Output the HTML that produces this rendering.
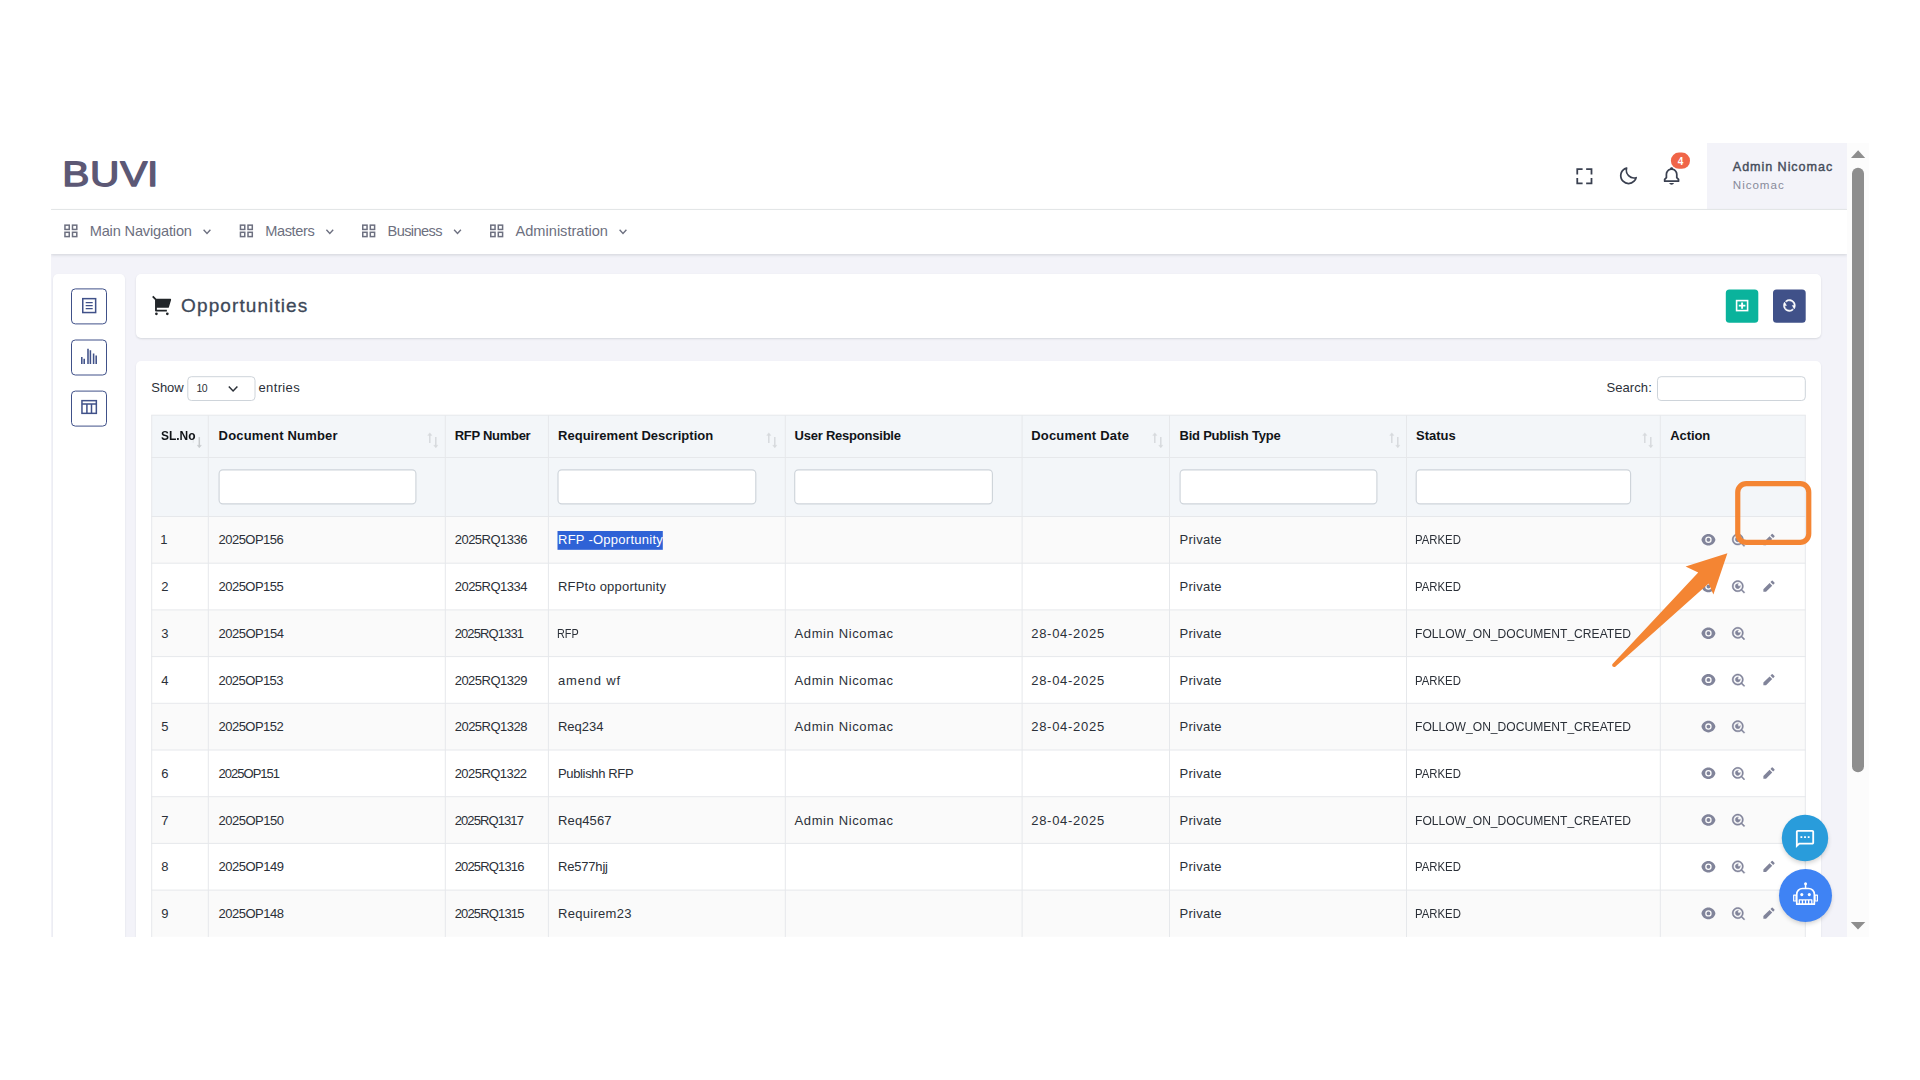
<!DOCTYPE html>
<html lang="en">
<head>
<meta charset="utf-8">
<title>Opportunities</title>
<style>
html,body{margin:0;padding:0;background:#fff}
body{width:1920px;height:1080px;overflow:hidden;position:relative;font-family:'Liberation Sans',sans-serif}
.frame{position:absolute;left:51px;top:143px;width:1818px;height:794px;overflow:hidden}
.inner{position:absolute;left:-51px;top:-143px;width:1920px;height:1080px}
.b{position:absolute}
.t{position:absolute;white-space:pre;line-height:1;font-weight:400;font-style:normal;text-align:left}
header,nav,main,h4,label,table,thead,tbody,tr,th,td{display:contents}
.i{position:absolute;overflow:visible}
</style>
</head>
<body>
<div class="frame"><div class="inner">
<div class="b" style="left:51px;top:143px;width:1796px;height:794px;background:#f3f3f9"></div>
<div class="b" style="left:51px;top:143px;width:1796px;height:66px;background:#fff"></div>
<div class="b" style="left:1707px;top:143px;width:140px;height:66px;background:#f3f3f9"></div>
<div class="b" style="left:51px;top:209px;width:1796px;height:1px;background:#e9ebec"></div>
<div class="b" style="left:51px;top:210px;width:1796px;height:44px;background:#fff;box-shadow:0 1px 3px rgba(56,65,74,.18)"></div>
<div class="b" style="left:53px;top:274px;width:72px;height:700px;background:#fff;border-radius:5px;box-shadow:0 1px 2px rgba(56,65,74,.12)"></div>
<div class="b" style="left:136px;top:274px;width:1685px;height:64px;background:#fff;border-radius:5px;box-shadow:0 1px 2px rgba(56,65,74,.15)"></div>
<div class="b" style="left:136px;top:360.5px;width:1685px;height:700px;background:#fff;border-radius:5px;box-shadow:0 1px 2px rgba(56,65,74,.12)"></div>
<div class="b" style="left:1847px;top:143px;width:22px;height:794px;background:#fcfcfc"></div>
<svg class="i" style="left:0;top:0" width="1920" height="1080" viewBox="0 0 1920 1080"><rect x="71.50" y="288.90" width="35.00" height="35.00" rx="3.8" fill="#fff" stroke="#405189" stroke-width="1"/>
<rect x="71.50" y="340.00" width="35.00" height="35.00" rx="3.8" fill="#fff" stroke="#405189" stroke-width="1"/>
<rect x="71.50" y="391.10" width="35.00" height="35.00" rx="3.8" fill="#fff" stroke="#405189" stroke-width="1"/>
<rect x="1725.80" y="289.40" width="32.50" height="33.40" rx="3.6" fill="#0ab39c"/>
<rect x="1773.00" y="289.40" width="32.70" height="33.40" rx="3.6" fill="#405189"/>
<rect x="187.80" y="376.70" width="67.20" height="23.80" rx="3.6" fill="#fff" stroke="#ced4da" stroke-width="1"/>
<rect x="1657.50" y="376.70" width="147.80" height="23.80" rx="3.6" fill="#fff" stroke="#ced4da" stroke-width="1"/>
<rect x="151.70" y="415.20" width="1653.60" height="101.30" fill="#f3f6f9"/>
<rect x="151.70" y="516.50" width="1653.60" height="46.70" fill="#fafafa"/>
<rect x="151.70" y="609.90" width="1653.60" height="46.70" fill="#fafafa"/>
<rect x="151.70" y="703.30" width="1653.60" height="46.70" fill="#fafafa"/>
<rect x="151.70" y="796.70" width="1653.60" height="46.70" fill="#fafafa"/>
<rect x="151.70" y="890.10" width="1653.60" height="46.70" fill="#fafafa"/>
<rect x="151.20" y="414.70" width="1654.60" height="1.00" fill="#e6e8eb"/>
<rect x="151.20" y="457.00" width="1654.60" height="1.00" fill="#e6e8eb"/>
<rect x="151.20" y="516.00" width="1654.60" height="1.00" fill="#e6e8eb"/>
<rect x="151.20" y="562.70" width="1654.60" height="1.00" fill="#e6e8eb"/>
<rect x="151.20" y="609.40" width="1654.60" height="1.00" fill="#e6e8eb"/>
<rect x="151.20" y="656.10" width="1654.60" height="1.00" fill="#e6e8eb"/>
<rect x="151.20" y="702.80" width="1654.60" height="1.00" fill="#e6e8eb"/>
<rect x="151.20" y="749.50" width="1654.60" height="1.00" fill="#e6e8eb"/>
<rect x="151.20" y="796.20" width="1654.60" height="1.00" fill="#e6e8eb"/>
<rect x="151.20" y="842.90" width="1654.60" height="1.00" fill="#e6e8eb"/>
<rect x="151.20" y="889.60" width="1654.60" height="1.00" fill="#e6e8eb"/>
<rect x="151.20" y="415.20" width="1.00" height="560.00" fill="#e6e8eb"/>
<rect x="207.80" y="415.20" width="1.00" height="560.00" fill="#e6e8eb"/>
<rect x="444.80" y="415.20" width="1.00" height="560.00" fill="#e6e8eb"/>
<rect x="547.90" y="415.20" width="1.00" height="560.00" fill="#e6e8eb"/>
<rect x="784.80" y="415.20" width="1.00" height="560.00" fill="#e6e8eb"/>
<rect x="1021.60" y="415.20" width="1.00" height="560.00" fill="#e6e8eb"/>
<rect x="1169.00" y="415.20" width="1.00" height="560.00" fill="#e6e8eb"/>
<rect x="1406.00" y="415.20" width="1.00" height="560.00" fill="#e6e8eb"/>
<rect x="1659.80" y="415.20" width="1.00" height="560.00" fill="#e6e8eb"/>
<rect x="1804.80" y="415.20" width="1.00" height="560.00" fill="#e6e8eb"/>
<rect x="219.10" y="469.90" width="196.80" height="34.00" rx="3.8" fill="#fff" stroke="#ced4da" stroke-width="1.15"/>
<rect x="558.00" y="469.90" width="197.80" height="34.00" rx="3.8" fill="#fff" stroke="#ced4da" stroke-width="1.15"/>
<rect x="794.70" y="469.90" width="197.70" height="34.00" rx="3.8" fill="#fff" stroke="#ced4da" stroke-width="1.15"/>
<rect x="1180.10" y="469.90" width="196.80" height="34.00" rx="3.8" fill="#fff" stroke="#ced4da" stroke-width="1.15"/>
<rect x="1416.20" y="469.90" width="214.40" height="34.00" rx="3.8" fill="#fff" stroke="#ced4da" stroke-width="1.15"/>
<rect x="557.50" y="531.00" width="105.30" height="18.80" fill="#2f62d6"/>
<rect x="1852.00" y="167.80" width="12.00" height="604.50" rx="6" fill="#8e8e8e"/>
<path d="M1851 158L1858.1 150.3L1865.2 158Z" fill="#8e8e8e"/>
<path d="M1850.8 922L1858 929.6L1865.3 922Z" fill="#8e8e8e"/>
<rect x="1670.90" y="152.60" width="19.10" height="16.20" rx="8.1" fill="#f06548"/></svg>
<svg class="i" style="left:0;top:0" width="1920" height="1080" viewBox="0 0 1920 1080"><text text-rendering="geometricPrecision" transform="scale(1.15,1)" x="54.11 78.18 104.5 127.82" y="186.1" font-family="'Liberation Sans',sans-serif" font-size="35.4" fill="#5c5875" stroke="#5c5875" stroke-width="1.3" stroke-linejoin="round">BUVI</text>
<g transform="translate(64.20 224.40)"><g fill="none" stroke="#6d7080" stroke-width="1.5"><rect x=".75" y=".75" width="4.3" height="4.3"/><rect x="8.3" y=".75" width="4.3" height="4.3"/><rect x=".75" y="7.9" width="4.3" height="4.3"/><rect x="8.3" y="7.9" width="4.3" height="4.3"/></g></g>
<g transform="translate(203.00 229.00)"><path d="M.6 .8L4 4.4L7.4 .8" fill="none" stroke="#6d7080" stroke-width="1.4"/></g>
<g transform="translate(239.70 224.40)"><g fill="none" stroke="#6d7080" stroke-width="1.5"><rect x=".75" y=".75" width="4.3" height="4.3"/><rect x="8.3" y=".75" width="4.3" height="4.3"/><rect x=".75" y="7.9" width="4.3" height="4.3"/><rect x="8.3" y="7.9" width="4.3" height="4.3"/></g></g>
<g transform="translate(325.80 229.00)"><path d="M.6 .8L4 4.4L7.4 .8" fill="none" stroke="#6d7080" stroke-width="1.4"/></g>
<g transform="translate(362.00 224.40)"><g fill="none" stroke="#6d7080" stroke-width="1.5"><rect x=".75" y=".75" width="4.3" height="4.3"/><rect x="8.3" y=".75" width="4.3" height="4.3"/><rect x=".75" y="7.9" width="4.3" height="4.3"/><rect x="8.3" y="7.9" width="4.3" height="4.3"/></g></g>
<g transform="translate(453.50 229.00)"><path d="M.6 .8L4 4.4L7.4 .8" fill="none" stroke="#6d7080" stroke-width="1.4"/></g>
<g transform="translate(490.00 224.40)"><g fill="none" stroke="#6d7080" stroke-width="1.5"><rect x=".75" y=".75" width="4.3" height="4.3"/><rect x="8.3" y=".75" width="4.3" height="4.3"/><rect x=".75" y="7.9" width="4.3" height="4.3"/><rect x="8.3" y="7.9" width="4.3" height="4.3"/></g></g>
<g transform="translate(619.00 229.00)"><path d="M.6 .8L4 4.4L7.4 .8" fill="none" stroke="#6d7080" stroke-width="1.4"/></g>
<g transform="translate(1573.70 165.50) scale(0.8900)"><path fill="#3a4050" d="M5 5h5V3H3v7h2zm5 14H5v-5H3v7h7zm11-5h-2v5h-5v2h7zm-2-4h2V3h-7v2h5z"/></g>
<g transform="translate(1617.90 165.60) scale(0.8660)"><path fill="#3a4050" d="M20.742 13.045a8.088 8.088 0 0 1-2.077.271c-2.135 0-4.140-.83-5.646-2.336a8.025 8.025 0 0 1-2.064-7.723A1 1 0 0 0 9.730 2.034a10.014 10.014 0 0 0-4.489 2.582c-3.898 3.898-3.898 10.243 0 14.143a9.937 9.937 0 0 0 7.072 2.930 9.930 9.930 0 0 0 7.070-2.929 10.007 10.007 0 0 0 2.583-4.491 1.001 1.001 0 0 0-1.224-1.224zm-2.772 4.301a7.947 7.947 0 0 1-5.656 2.343 7.953 7.953 0 0 1-5.658-2.344c-3.118-3.119-3.118-8.195 0-11.314a7.923 7.923 0 0 1 2.060-1.483 10.027 10.027 0 0 0 2.890 7.848 9.972 9.972 0 0 0 7.848 2.891 8.036 8.036 0 0 1-1.484 2.059z"/></g>
<g transform="translate(1661.20 165.60) scale(0.8660)"><path fill="#3a4050" d="M19 13.586V10c0-3.217-2.185-5.927-5.145-6.742C13.562 2.520 12.846 2 12 2s-1.562.520-1.855 1.258C7.185 4.074 5 6.783 5 10v3.586l-1.707 1.707A.996.996 0 0 0 3 16v2a1 1 0 0 0 1 1h16a1 1 0 0 0 1-1v-2a.996.996 0 0 0-.293-.707L19 13.586zM19 17H5v-.586l1.707-1.707A.996.996 0 0 0 7 14v-4c0-2.757 2.243-5 5-5s5 2.243 5 5v4c0 .266.105.520.293.707L19 16.414V17zm-7 5a2.980 2.980 0 0 0 2.818-2H9.182A2.980 2.980 0 0 0 12 22z"/></g>
<g transform="translate(151.40 294.20) scale(0.9100)"><path fill="#212529" d="M4 6.414L.757 3.172l1.415-1.415L5.414 5h15.242a1 1 0 0 1 .958 1.287l-2.400 8a1 1 0 0 1-.958.713H6v2h11v2H5a1 1 0 0 1-1-1V6.414zM5.500 23a1.500 1.500 0 1 1 0-3 1.500 1.500 0 0 1 0 3zm12 0a1.500 1.500 0 1 1 0-3 1.500 1.500 0 0 1 0 3z"/></g>
<g transform="translate(82.00 297.90)"><g fill="none" stroke="#405189" stroke-width="1.5"><rect x=".75" y=".75" width="12.9" height="13.9"/><path d="M3.700 4.700h7M3.700 7.700h7M3.700 10.700h7" stroke-width="1.3"/></g></g>
<g transform="translate(80.50 348.00)"><g stroke="#405189" stroke-width="1.55" fill="none"><path d="M1.300 9.100v6.900M3.700 10.700v5.300M7.500 .7v15.300M9.900 2.300v13.700M13.100 5.500v10.500M15.700 7.500v8.500"/></g></g>
<g transform="translate(81.20 399.90)"><g fill="none" stroke="#405189" stroke-width="1.5"><rect x=".75" y=".75" width="14.4" height="12.7"/><path d="M.75 4.200h14.400M5.700 4.200v9.200M10.300 4.200v9.200"/></g></g>
<g transform="translate(1735.80 299.80)"><g fill="none" stroke="#fff"><rect x=".8" y=".8" width="11" height="10" stroke-width="1.6"/><path d="M6.300 2.600v6.400M3 5.800h6.600" stroke-width="1.9"/></g></g>
<g transform="translate(1782.30 298.40) scale(0.5917 0.5917)"><path fill="#fff" stroke="#fff" stroke-width=".9" stroke-linejoin="round" d="M5.460 4.430A9.960 9.960 0 0 1 12 2c5.520 0 10 4.480 10 10 0 2.140-.67 4.120-1.810 5.740L17 12h3a8 8 0 0 0-13.540-5.770l-1-1.800zm13.080 15.140A9.960 9.960 0 0 1 12 22C6.480 22 2 17.520 2 12c0-2.140.67-4.120 1.810-5.740L7 12H4a8 8 0 0 0 13.540 5.770l1 1.800z"/></g>
<g transform="translate(228.00 385.80)"><path d="M.8 .8L5.100 5.200L9.400 .8" fill="none" stroke="#2b3038" stroke-width="1.5"/></g>
<g transform="translate(190.00 431.50)"><g fill="#212529" stroke="#212529"><g opacity="0.05"><path d="M3.300 11.400V2.800" stroke-width="1.500" fill="none"/><path d="M1.100 3.900L3.300 1.200L5.500 3.900Z" stroke-width=".3"/></g><g opacity="0.2"><path d="M9.300 5.600V14.700" stroke-width="1.500" fill="none"/><path d="M7.100 13.700L9.300 16.400L11.500 13.700Z" stroke-width=".3"/></g></g></g>
<g transform="translate(426.50 431.50)"><g fill="#212529" stroke="#212529"><g opacity="0.13"><path d="M3.300 11.400V2.800" stroke-width="1.500" fill="none"/><path d="M1.100 3.900L3.300 1.200L5.500 3.900Z" stroke-width=".3"/></g><g opacity="0.13"><path d="M9.300 5.600V14.700" stroke-width="1.500" fill="none"/><path d="M7.100 13.700L9.300 16.400L11.500 13.700Z" stroke-width=".3"/></g></g></g>
<g transform="translate(765.50 431.50)"><g fill="#212529" stroke="#212529"><g opacity="0.13"><path d="M3.300 11.400V2.800" stroke-width="1.500" fill="none"/><path d="M1.100 3.900L3.300 1.200L5.500 3.900Z" stroke-width=".3"/></g><g opacity="0.13"><path d="M9.300 5.600V14.700" stroke-width="1.500" fill="none"/><path d="M7.100 13.700L9.300 16.400L11.500 13.700Z" stroke-width=".3"/></g></g></g>
<g transform="translate(1151.50 431.50)"><g fill="#212529" stroke="#212529"><g opacity="0.13"><path d="M3.300 11.400V2.800" stroke-width="1.500" fill="none"/><path d="M1.100 3.900L3.300 1.200L5.500 3.900Z" stroke-width=".3"/></g><g opacity="0.13"><path d="M9.300 5.600V14.700" stroke-width="1.500" fill="none"/><path d="M7.100 13.700L9.300 16.400L11.500 13.700Z" stroke-width=".3"/></g></g></g>
<g transform="translate(1388.50 431.50)"><g fill="#212529" stroke="#212529"><g opacity="0.13"><path d="M3.300 11.400V2.800" stroke-width="1.500" fill="none"/><path d="M1.100 3.900L3.300 1.200L5.500 3.900Z" stroke-width=".3"/></g><g opacity="0.13"><path d="M9.300 5.600V14.700" stroke-width="1.500" fill="none"/><path d="M7.100 13.700L9.300 16.400L11.500 13.700Z" stroke-width=".3"/></g></g></g>
<g transform="translate(1641.50 431.50)"><g fill="#212529" stroke="#212529"><g opacity="0.13"><path d="M3.300 11.400V2.800" stroke-width="1.500" fill="none"/><path d="M1.100 3.900L3.300 1.200L5.500 3.900Z" stroke-width=".3"/></g><g opacity="0.13"><path d="M9.300 5.600V14.700" stroke-width="1.500" fill="none"/><path d="M7.100 13.700L9.300 16.400L11.500 13.700Z" stroke-width=".3"/></g></g></g>
<g transform="translate(1700.70 532.06) scale(0.6450)"><path fill="#81849a" d="M1.181 12C2.121 6.880 6.608 3 12 3c5.392 0 9.878 3.880 10.819 9-.94 5.120-5.427 9-10.819 9-5.392 0-9.878-3.880-10.819-9zM12 17a5 5 0 1 0 0-10 5 5 0 0 0 0 10zm0-2a3 3 0 1 1 0-6 3 3 0 0 1 0 6z"/></g>
<g transform="translate(1730.90 532.56) scale(0.6257)"><path fill="#81849a" stroke="#81849a" stroke-width=".7" d="M18.031 16.617l4.283 4.282-1.415 1.415-4.282-4.283A8.960 8.960 0 0 1 11 20c-4.968 0-9-4.032-9-9s4.032-9 9-9 9 4.032 9 9a8.960 8.960 0 0 1-1.969 5.617zm-2.006-.742A6.977 6.977 0 0 0 18 11c0-3.868-3.133-7-7-7-3.868 0-7 3.132-7 7 0 3.867 3.132 7 7 7a6.977 6.977 0 0 0 4.875-1.975l.15-.15zm-3.847-8.699a2 2 0 1 0 2.646 2.646 4 4 0 1 1-2.646-2.646z"/></g>
<g transform="translate(1761.50 532.01) scale(0.6257)"><path fill="#81849a" d="M12.900 6.858l4.242 4.243L7.242 21H3v-4.243l9.900-9.900zm1.414-1.414l2.121-2.122a1 1 0 0 1 1.414 0l2.829 2.829a1 1 0 0 1 0 1.414l-2.122 2.121-4.242-4.242z"/></g>
<g transform="translate(1700.70 578.76) scale(0.6450)"><path fill="#81849a" d="M1.181 12C2.121 6.880 6.608 3 12 3c5.392 0 9.878 3.880 10.819 9-.94 5.120-5.427 9-10.819 9-5.392 0-9.878-3.880-10.819-9zM12 17a5 5 0 1 0 0-10 5 5 0 0 0 0 10zm0-2a3 3 0 1 1 0-6 3 3 0 0 1 0 6z"/></g>
<g transform="translate(1730.90 579.26) scale(0.6257)"><path fill="#81849a" stroke="#81849a" stroke-width=".7" d="M18.031 16.617l4.283 4.282-1.415 1.415-4.282-4.283A8.960 8.960 0 0 1 11 20c-4.968 0-9-4.032-9-9s4.032-9 9-9 9 4.032 9 9a8.960 8.960 0 0 1-1.969 5.617zm-2.006-.742A6.977 6.977 0 0 0 18 11c0-3.868-3.133-7-7-7-3.868 0-7 3.132-7 7 0 3.867 3.132 7 7 7a6.977 6.977 0 0 0 4.875-1.975l.15-.15zm-3.847-8.699a2 2 0 1 0 2.646 2.646 4 4 0 1 1-2.646-2.646z"/></g>
<g transform="translate(1761.50 578.71) scale(0.6257)"><path fill="#81849a" d="M12.900 6.858l4.242 4.243L7.242 21H3v-4.243l9.900-9.900zm1.414-1.414l2.121-2.122a1 1 0 0 1 1.414 0l2.829 2.829a1 1 0 0 1 0 1.414l-2.122 2.121-4.242-4.242z"/></g>
<g transform="translate(1700.70 625.46) scale(0.6450)"><path fill="#81849a" d="M1.181 12C2.121 6.880 6.608 3 12 3c5.392 0 9.878 3.880 10.819 9-.94 5.120-5.427 9-10.819 9-5.392 0-9.878-3.880-10.819-9zM12 17a5 5 0 1 0 0-10 5 5 0 0 0 0 10zm0-2a3 3 0 1 1 0-6 3 3 0 0 1 0 6z"/></g>
<g transform="translate(1730.90 625.96) scale(0.6257)"><path fill="#81849a" stroke="#81849a" stroke-width=".7" d="M18.031 16.617l4.283 4.282-1.415 1.415-4.282-4.283A8.960 8.960 0 0 1 11 20c-4.968 0-9-4.032-9-9s4.032-9 9-9 9 4.032 9 9a8.960 8.960 0 0 1-1.969 5.617zm-2.006-.742A6.977 6.977 0 0 0 18 11c0-3.868-3.133-7-7-7-3.868 0-7 3.132-7 7 0 3.867 3.132 7 7 7a6.977 6.977 0 0 0 4.875-1.975l.15-.15zm-3.847-8.699a2 2 0 1 0 2.646 2.646 4 4 0 1 1-2.646-2.646z"/></g>
<g transform="translate(1700.70 672.16) scale(0.6450)"><path fill="#81849a" d="M1.181 12C2.121 6.880 6.608 3 12 3c5.392 0 9.878 3.880 10.819 9-.94 5.120-5.427 9-10.819 9-5.392 0-9.878-3.880-10.819-9zM12 17a5 5 0 1 0 0-10 5 5 0 0 0 0 10zm0-2a3 3 0 1 1 0-6 3 3 0 0 1 0 6z"/></g>
<g transform="translate(1730.90 672.66) scale(0.6257)"><path fill="#81849a" stroke="#81849a" stroke-width=".7" d="M18.031 16.617l4.283 4.282-1.415 1.415-4.282-4.283A8.960 8.960 0 0 1 11 20c-4.968 0-9-4.032-9-9s4.032-9 9-9 9 4.032 9 9a8.960 8.960 0 0 1-1.969 5.617zm-2.006-.742A6.977 6.977 0 0 0 18 11c0-3.868-3.133-7-7-7-3.868 0-7 3.132-7 7 0 3.867 3.132 7 7 7a6.977 6.977 0 0 0 4.875-1.975l.15-.15zm-3.847-8.699a2 2 0 1 0 2.646 2.646 4 4 0 1 1-2.646-2.646z"/></g>
<g transform="translate(1761.50 672.11) scale(0.6257)"><path fill="#81849a" d="M12.900 6.858l4.242 4.243L7.242 21H3v-4.243l9.900-9.900zm1.414-1.414l2.121-2.122a1 1 0 0 1 1.414 0l2.829 2.829a1 1 0 0 1 0 1.414l-2.122 2.121-4.242-4.242z"/></g>
<g transform="translate(1700.70 718.86) scale(0.6450)"><path fill="#81849a" d="M1.181 12C2.121 6.880 6.608 3 12 3c5.392 0 9.878 3.880 10.819 9-.94 5.120-5.427 9-10.819 9-5.392 0-9.878-3.880-10.819-9zM12 17a5 5 0 1 0 0-10 5 5 0 0 0 0 10zm0-2a3 3 0 1 1 0-6 3 3 0 0 1 0 6z"/></g>
<g transform="translate(1730.90 719.36) scale(0.6257)"><path fill="#81849a" stroke="#81849a" stroke-width=".7" d="M18.031 16.617l4.283 4.282-1.415 1.415-4.282-4.283A8.960 8.960 0 0 1 11 20c-4.968 0-9-4.032-9-9s4.032-9 9-9 9 4.032 9 9a8.960 8.960 0 0 1-1.969 5.617zm-2.006-.742A6.977 6.977 0 0 0 18 11c0-3.868-3.133-7-7-7-3.868 0-7 3.132-7 7 0 3.867 3.132 7 7 7a6.977 6.977 0 0 0 4.875-1.975l.15-.15zm-3.847-8.699a2 2 0 1 0 2.646 2.646 4 4 0 1 1-2.646-2.646z"/></g>
<g transform="translate(1700.70 765.56) scale(0.6450)"><path fill="#81849a" d="M1.181 12C2.121 6.880 6.608 3 12 3c5.392 0 9.878 3.880 10.819 9-.94 5.120-5.427 9-10.819 9-5.392 0-9.878-3.880-10.819-9zM12 17a5 5 0 1 0 0-10 5 5 0 0 0 0 10zm0-2a3 3 0 1 1 0-6 3 3 0 0 1 0 6z"/></g>
<g transform="translate(1730.90 766.06) scale(0.6257)"><path fill="#81849a" stroke="#81849a" stroke-width=".7" d="M18.031 16.617l4.283 4.282-1.415 1.415-4.282-4.283A8.960 8.960 0 0 1 11 20c-4.968 0-9-4.032-9-9s4.032-9 9-9 9 4.032 9 9a8.960 8.960 0 0 1-1.969 5.617zm-2.006-.742A6.977 6.977 0 0 0 18 11c0-3.868-3.133-7-7-7-3.868 0-7 3.132-7 7 0 3.867 3.132 7 7 7a6.977 6.977 0 0 0 4.875-1.975l.15-.15zm-3.847-8.699a2 2 0 1 0 2.646 2.646 4 4 0 1 1-2.646-2.646z"/></g>
<g transform="translate(1761.50 765.51) scale(0.6257)"><path fill="#81849a" d="M12.900 6.858l4.242 4.243L7.242 21H3v-4.243l9.900-9.900zm1.414-1.414l2.121-2.122a1 1 0 0 1 1.414 0l2.829 2.829a1 1 0 0 1 0 1.414l-2.122 2.121-4.242-4.242z"/></g>
<g transform="translate(1700.70 812.26) scale(0.6450)"><path fill="#81849a" d="M1.181 12C2.121 6.880 6.608 3 12 3c5.392 0 9.878 3.880 10.819 9-.94 5.120-5.427 9-10.819 9-5.392 0-9.878-3.880-10.819-9zM12 17a5 5 0 1 0 0-10 5 5 0 0 0 0 10zm0-2a3 3 0 1 1 0-6 3 3 0 0 1 0 6z"/></g>
<g transform="translate(1730.90 812.76) scale(0.6257)"><path fill="#81849a" stroke="#81849a" stroke-width=".7" d="M18.031 16.617l4.283 4.282-1.415 1.415-4.282-4.283A8.960 8.960 0 0 1 11 20c-4.968 0-9-4.032-9-9s4.032-9 9-9 9 4.032 9 9a8.960 8.960 0 0 1-1.969 5.617zm-2.006-.742A6.977 6.977 0 0 0 18 11c0-3.868-3.133-7-7-7-3.868 0-7 3.132-7 7 0 3.867 3.132 7 7 7a6.977 6.977 0 0 0 4.875-1.975l.15-.15zm-3.847-8.699a2 2 0 1 0 2.646 2.646 4 4 0 1 1-2.646-2.646z"/></g>
<g transform="translate(1700.70 858.96) scale(0.6450)"><path fill="#81849a" d="M1.181 12C2.121 6.880 6.608 3 12 3c5.392 0 9.878 3.880 10.819 9-.94 5.120-5.427 9-10.819 9-5.392 0-9.878-3.880-10.819-9zM12 17a5 5 0 1 0 0-10 5 5 0 0 0 0 10zm0-2a3 3 0 1 1 0-6 3 3 0 0 1 0 6z"/></g>
<g transform="translate(1730.90 859.46) scale(0.6257)"><path fill="#81849a" stroke="#81849a" stroke-width=".7" d="M18.031 16.617l4.283 4.282-1.415 1.415-4.282-4.283A8.960 8.960 0 0 1 11 20c-4.968 0-9-4.032-9-9s4.032-9 9-9 9 4.032 9 9a8.960 8.960 0 0 1-1.969 5.617zm-2.006-.742A6.977 6.977 0 0 0 18 11c0-3.868-3.133-7-7-7-3.868 0-7 3.132-7 7 0 3.867 3.132 7 7 7a6.977 6.977 0 0 0 4.875-1.975l.15-.15zm-3.847-8.699a2 2 0 1 0 2.646 2.646 4 4 0 1 1-2.646-2.646z"/></g>
<g transform="translate(1761.50 858.91) scale(0.6257)"><path fill="#81849a" d="M12.900 6.858l4.242 4.243L7.242 21H3v-4.243l9.900-9.900zm1.414-1.414l2.121-2.122a1 1 0 0 1 1.414 0l2.829 2.829a1 1 0 0 1 0 1.414l-2.122 2.121-4.242-4.242z"/></g>
<g transform="translate(1700.70 905.66) scale(0.6450)"><path fill="#81849a" d="M1.181 12C2.121 6.880 6.608 3 12 3c5.392 0 9.878 3.880 10.819 9-.94 5.120-5.427 9-10.819 9-5.392 0-9.878-3.880-10.819-9zM12 17a5 5 0 1 0 0-10 5 5 0 0 0 0 10zm0-2a3 3 0 1 1 0-6 3 3 0 0 1 0 6z"/></g>
<g transform="translate(1730.90 906.16) scale(0.6257)"><path fill="#81849a" stroke="#81849a" stroke-width=".7" d="M18.031 16.617l4.283 4.282-1.415 1.415-4.282-4.283A8.960 8.960 0 0 1 11 20c-4.968 0-9-4.032-9-9s4.032-9 9-9 9 4.032 9 9a8.960 8.960 0 0 1-1.969 5.617zm-2.006-.742A6.977 6.977 0 0 0 18 11c0-3.868-3.133-7-7-7-3.868 0-7 3.132-7 7 0 3.867 3.132 7 7 7a6.977 6.977 0 0 0 4.875-1.975l.15-.15zm-3.847-8.699a2 2 0 1 0 2.646 2.646 4 4 0 1 1-2.646-2.646z"/></g>
<g transform="translate(1761.50 905.61) scale(0.6257)"><path fill="#81849a" d="M12.900 6.858l4.242 4.243L7.242 21H3v-4.243l9.900-9.900zm1.414-1.414l2.121-2.122a1 1 0 0 1 1.414 0l2.829 2.829a1 1 0 0 1 0 1.414l-2.122 2.121-4.242-4.242z"/></g></svg>
<header><span class="t" style="left:1732.8px;top:160.5px;font-size:12.6px;color:#454c5a;letter-spacing:0.934px;-webkit-text-stroke:0.4px #454c5a;">Admin Nicomac</span><span class="t" style="left:1732.8px;top:179.2px;font-size:11.6px;color:#878a99;letter-spacing:0.965px;">Nicomac</span><span class="t" style="left:1677.8px;top:157.0px;font-size:10px;color:#ffffff;font-weight:700;">4</span></header>
<nav><span class="t" style="left:89.7px;top:224.0px;font-size:14.6px;color:#6d7080;letter-spacing:-0.168px;">Main Navigation</span><span class="t" style="left:265.3px;top:224.0px;font-size:14.6px;color:#6d7080;letter-spacing:-0.418px;">Masters</span><span class="t" style="left:387.5px;top:224.0px;font-size:14.6px;color:#6d7080;letter-spacing:-0.603px;">Business</span><span class="t" style="left:515.5px;top:224.0px;font-size:14.6px;color:#6d7080;letter-spacing:0.002px;">Administration</span></nav>
<main><h4><span class="t" style="left:181.1px;top:296.1px;font-size:19px;color:#3d4858;letter-spacing:1.099px;-webkit-text-stroke:0.3px #3d4858;">Opportunities</span></h4>
<label><span class="t" style="left:151.3px;top:381.2px;font-size:13px;color:#2b3038;letter-spacing:-0.044px;">Show</span><span class="t" style="left:196.6px;top:382.8px;font-size:10.5px;color:#2b3038;letter-spacing:-.8px;">10</span><span class="t" style="left:258.5px;top:381.2px;font-size:13px;color:#2b3038;letter-spacing:0.361px;">entries</span><span class="t" style="left:1606.4px;top:381.2px;font-size:13px;color:#2b3038;letter-spacing:0.098px;">Search:</span></label>
<table><thead><tr><th><span class="t" style="left:161.2px;top:428.7px;font-size:13px;color:#111418;font-weight:700;transform:scaleX(0.9200);transform-origin:0 0;">SL.No</span></th><th><span class="t" style="left:218.6px;top:428.7px;font-size:13px;color:#111418;font-weight:700;letter-spacing:0.186px;">Document Number</span></th><th><span class="t" style="left:454.7px;top:428.7px;font-size:13px;color:#111418;font-weight:700;letter-spacing:-0.278px;">RFP Number</span></th><th><span class="t" style="left:558.0px;top:428.7px;font-size:13px;color:#111418;font-weight:700;letter-spacing:0.028px;">Requirement Description</span></th><th><span class="t" style="left:794.5px;top:428.7px;font-size:13px;color:#111418;font-weight:700;letter-spacing:-0.222px;">User Responsible</span></th><th><span class="t" style="left:1031.2px;top:428.7px;font-size:13px;color:#111418;font-weight:700;letter-spacing:0.203px;">Document Date</span></th><th><span class="t" style="left:1179.5px;top:428.7px;font-size:13px;color:#111418;font-weight:700;letter-spacing:-0.220px;">Bid Publish Type</span></th><th><span class="t" style="left:1416.0px;top:428.7px;font-size:13px;color:#111418;font-weight:700;letter-spacing:0.013px;">Status</span></th><th><span class="t" style="left:1670.3px;top:428.7px;font-size:13px;color:#111418;font-weight:700;letter-spacing:-0.091px;">Action</span></th></tr></thead><tbody>
<tr><td><span class="t" style="left:160.2px;top:533.4px;font-size:13px;color:#2b3038;">1</span></td><td><span class="t" style="left:218.5px;top:533.4px;font-size:13px;color:#2b3038;letter-spacing:-0.513px;">2025OP156</span></td><td><span class="t" style="left:454.7px;top:533.4px;font-size:13px;color:#2b3038;letter-spacing:-0.505px;">2025RQ1336</span></td><td><span class="t" style="left:558.0px;top:533.4px;font-size:13px;color:#ffffff;letter-spacing:0.259px;">RFP -Opportunity</span></td><td></td><td></td><td><span class="t" style="left:1179.5px;top:533.4px;font-size:13px;color:#2b3038;letter-spacing:0.255px;">Private</span></td><td><span class="t" style="left:1415.3px;top:533.4px;font-size:13px;color:#2b3038;transform:scaleX(0.8745);transform-origin:0 0;">PARKED</span></td><td></td></tr>
<tr><td><span class="t" style="left:161.2px;top:580.1px;font-size:13px;color:#2b3038;">2</span></td><td><span class="t" style="left:218.5px;top:580.1px;font-size:13px;color:#2b3038;letter-spacing:-0.513px;">2025OP155</span></td><td><span class="t" style="left:454.7px;top:580.1px;font-size:13px;color:#2b3038;letter-spacing:-0.505px;">2025RQ1334</span></td><td><span class="t" style="left:558.0px;top:580.1px;font-size:13px;color:#2b3038;letter-spacing:0.201px;">RFPto opportunity</span></td><td></td><td></td><td><span class="t" style="left:1179.5px;top:580.1px;font-size:13px;color:#2b3038;letter-spacing:0.255px;">Private</span></td><td><span class="t" style="left:1415.3px;top:580.1px;font-size:13px;color:#2b3038;transform:scaleX(0.8745);transform-origin:0 0;">PARKED</span></td><td></td></tr>
<tr><td><span class="t" style="left:161.2px;top:626.8px;font-size:13px;color:#2b3038;">3</span></td><td><span class="t" style="left:218.5px;top:626.8px;font-size:13px;color:#2b3038;letter-spacing:-0.488px;">2025OP154</span></td><td><span class="t" style="left:454.7px;top:626.8px;font-size:13px;color:#2b3038;letter-spacing:-0.894px;">2025RQ1331</span></td><td><span class="t" style="left:557.3px;top:626.8px;font-size:13px;color:#2b3038;transform:scaleX(0.8333);transform-origin:0 0;">RFP</span></td><td><span class="t" style="left:794.5px;top:626.8px;font-size:13px;color:#2b3038;letter-spacing:0.622px;">Admin Nicomac</span></td><td><span class="t" style="left:1031.2px;top:626.8px;font-size:13px;color:#2b3038;letter-spacing:0.722px;">28-04-2025</span></td><td><span class="t" style="left:1179.5px;top:626.8px;font-size:13px;color:#2b3038;letter-spacing:0.255px;">Private</span></td><td><span class="t" style="left:1415.3px;top:626.8px;font-size:13px;color:#2b3038;transform:scaleX(0.9295);transform-origin:0 0;">FOLLOW_ON_DOCUMENT_CREATED</span></td><td></td></tr>
<tr><td><span class="t" style="left:161.2px;top:673.5px;font-size:13px;color:#2b3038;">4</span></td><td><span class="t" style="left:218.5px;top:673.5px;font-size:13px;color:#2b3038;letter-spacing:-0.551px;">2025OP153</span></td><td><span class="t" style="left:454.7px;top:673.5px;font-size:13px;color:#2b3038;letter-spacing:-0.516px;">2025RQ1329</span></td><td><span class="t" style="left:558.0px;top:673.5px;font-size:13px;color:#2b3038;letter-spacing:0.804px;">amend wf</span></td><td><span class="t" style="left:794.5px;top:673.5px;font-size:13px;color:#2b3038;letter-spacing:0.622px;">Admin Nicomac</span></td><td><span class="t" style="left:1031.2px;top:673.5px;font-size:13px;color:#2b3038;letter-spacing:0.722px;">28-04-2025</span></td><td><span class="t" style="left:1179.5px;top:673.5px;font-size:13px;color:#2b3038;letter-spacing:0.255px;">Private</span></td><td><span class="t" style="left:1415.3px;top:673.5px;font-size:13px;color:#2b3038;transform:scaleX(0.8745);transform-origin:0 0;">PARKED</span></td><td></td></tr>
<tr><td><span class="t" style="left:161.2px;top:720.2px;font-size:13px;color:#2b3038;">5</span></td><td><span class="t" style="left:218.5px;top:720.2px;font-size:13px;color:#2b3038;letter-spacing:-0.513px;">2025OP152</span></td><td><span class="t" style="left:454.7px;top:720.2px;font-size:13px;color:#2b3038;letter-spacing:-0.505px;">2025RQ1328</span></td><td><span class="t" style="left:558.0px;top:720.2px;font-size:13px;color:#2b3038;letter-spacing:-0.029px;">Req234</span></td><td><span class="t" style="left:794.5px;top:720.2px;font-size:13px;color:#2b3038;letter-spacing:0.622px;">Admin Nicomac</span></td><td><span class="t" style="left:1031.2px;top:720.2px;font-size:13px;color:#2b3038;letter-spacing:0.722px;">28-04-2025</span></td><td><span class="t" style="left:1179.5px;top:720.2px;font-size:13px;color:#2b3038;letter-spacing:0.255px;">Private</span></td><td><span class="t" style="left:1415.3px;top:720.2px;font-size:13px;color:#2b3038;transform:scaleX(0.9295);transform-origin:0 0;">FOLLOW_ON_DOCUMENT_CREATED</span></td><td></td></tr>
<tr><td><span class="t" style="left:161.2px;top:766.9px;font-size:13px;color:#2b3038;">6</span></td><td><span class="t" style="left:218.5px;top:766.9px;font-size:13px;color:#2b3038;letter-spacing:-0.976px;">2025OP151</span></td><td><span class="t" style="left:454.7px;top:766.9px;font-size:13px;color:#2b3038;letter-spacing:-0.549px;">2025RQ1322</span></td><td><span class="t" style="left:558.0px;top:766.9px;font-size:13px;color:#2b3038;letter-spacing:-0.353px;">Publishh RFP</span></td><td></td><td></td><td><span class="t" style="left:1179.5px;top:766.9px;font-size:13px;color:#2b3038;letter-spacing:0.255px;">Private</span></td><td><span class="t" style="left:1415.3px;top:766.9px;font-size:13px;color:#2b3038;transform:scaleX(0.8745);transform-origin:0 0;">PARKED</span></td><td></td></tr>
<tr><td><span class="t" style="left:161.2px;top:813.6px;font-size:13px;color:#2b3038;">7</span></td><td><span class="t" style="left:218.5px;top:813.6px;font-size:13px;color:#2b3038;letter-spacing:-0.488px;">2025OP150</span></td><td><span class="t" style="left:454.7px;top:813.6px;font-size:13px;color:#2b3038;letter-spacing:-0.905px;">2025RQ1317</span></td><td><span class="t" style="left:558.0px;top:813.6px;font-size:13px;color:#2b3038;letter-spacing:0.136px;">Req4567</span></td><td><span class="t" style="left:794.5px;top:813.6px;font-size:13px;color:#2b3038;letter-spacing:0.622px;">Admin Nicomac</span></td><td><span class="t" style="left:1031.2px;top:813.6px;font-size:13px;color:#2b3038;letter-spacing:0.722px;">28-04-2025</span></td><td><span class="t" style="left:1179.5px;top:813.6px;font-size:13px;color:#2b3038;letter-spacing:0.255px;">Private</span></td><td><span class="t" style="left:1415.3px;top:813.6px;font-size:13px;color:#2b3038;transform:scaleX(0.9295);transform-origin:0 0;">FOLLOW_ON_DOCUMENT_CREATED</span></td><td></td></tr>
<tr><td><span class="t" style="left:161.2px;top:860.3px;font-size:13px;color:#2b3038;">8</span></td><td><span class="t" style="left:218.5px;top:860.3px;font-size:13px;color:#2b3038;letter-spacing:-0.488px;">2025OP149</span></td><td><span class="t" style="left:454.7px;top:860.3px;font-size:13px;color:#2b3038;letter-spacing:-0.838px;">2025RQ1316</span></td><td><span class="t" style="left:558.0px;top:860.3px;font-size:13px;color:#2b3038;letter-spacing:-0.190px;">Re577hjj</span></td><td></td><td></td><td><span class="t" style="left:1179.5px;top:860.3px;font-size:13px;color:#2b3038;letter-spacing:0.255px;">Private</span></td><td><span class="t" style="left:1415.3px;top:860.3px;font-size:13px;color:#2b3038;transform:scaleX(0.8745);transform-origin:0 0;">PARKED</span></td><td></td></tr>
<tr><td><span class="t" style="left:161.2px;top:907.0px;font-size:13px;color:#2b3038;">9</span></td><td><span class="t" style="left:218.5px;top:907.0px;font-size:13px;color:#2b3038;letter-spacing:-0.488px;">2025OP148</span></td><td><span class="t" style="left:454.7px;top:907.0px;font-size:13px;color:#2b3038;letter-spacing:-0.838px;">2025RQ1315</span></td><td><span class="t" style="left:558.0px;top:907.0px;font-size:13px;color:#2b3038;letter-spacing:0.286px;">Requirem23</span></td><td></td><td></td><td><span class="t" style="left:1179.5px;top:907.0px;font-size:13px;color:#2b3038;letter-spacing:0.255px;">Private</span></td><td><span class="t" style="left:1415.3px;top:907.0px;font-size:13px;color:#2b3038;transform:scaleX(0.8745);transform-origin:0 0;">PARKED</span></td><td></td></tr>
</tbody></table></main>
<svg class="i" style="left:0;top:0" width="1920" height="1080" viewBox="0 0 1920 1080"><defs><filter id="fs" x="-30%" y="-30%" width="160%" height="170%"><feGaussianBlur stdDeviation="2.6"/></filter></defs>
<circle cx="1805" cy="840.5" r="22.5" fill="#000" opacity=".2" filter="url(#fs)"/>
<circle cx="1805.5" cy="898" r="25.5" fill="#000" opacity=".2" filter="url(#fs)"/>
<circle cx="1805" cy="838" r="23.2" fill="#299cdb"/>
<circle cx="1805.5" cy="895.5" r="26.5" fill="#3f83f4"/>
<g transform="translate(1794.1 828.1) scale(.91)"><path fill="#fff" d="M20 2H4c-1.100 0-2 .9-2 2v18l4-4h14c1.100 0 2-.9 2-2V4c0-1.100-.9-2-2-2zm0 14H5.170L4 17.170V4h16v12zM7 9h2v2H7zm4 0h2v2h-2zm4 0h2v2h-2z"/></g>
<g fill="none" stroke="#fff" stroke-width="1.7" stroke-linejoin="round">
<path d="M1796.750 904.150V894.300a5.800 5.800 0 0 1 5.800-5.800h6a5.800 5.800 0 0 1 5.800 5.800v9.850Z"/>
<path d="M1805.550 888.300v-3.400" stroke-width="1.5"/>
<path d="M1799.300 904v-4.100h12.500v4.100M1802.450 900v4M1805.550 900v4M1808.650 900v4" stroke-width="1.300"/>
<rect x="1793.700" y="895.200" width="2.400" height="5.800" stroke-width="1.200"/>
<rect x="1815" y="895.200" width="2.400" height="5.800" stroke-width="1.200"/>
</g><circle cx="1805.550" cy="883.800" r="1.500" fill="#fff"/><circle cx="1801.800" cy="894.600" r="1.550" fill="#fff"/><circle cx="1809.300" cy="894.600" r="1.550" fill="#fff"/></svg>

</div></div>
<svg class="i" style="left:0;top:0" width="1920" height="1080" viewBox="0 0 1920 1080">
<rect x="1737.750" y="483.700" width="71" height="58.600" rx="8.500" ry="8.500" fill="none" stroke="#f48533" stroke-width="5.200"/>
<path d="M1727.400 553.200L1685.600 566.600L1698.200 572.600L1612.300 664.200Q1611.600 667.300 1615 666.900L1708.600 583.400L1713.400 594.400Z" fill="#f48533"/>
</svg>
</body>
</html>
